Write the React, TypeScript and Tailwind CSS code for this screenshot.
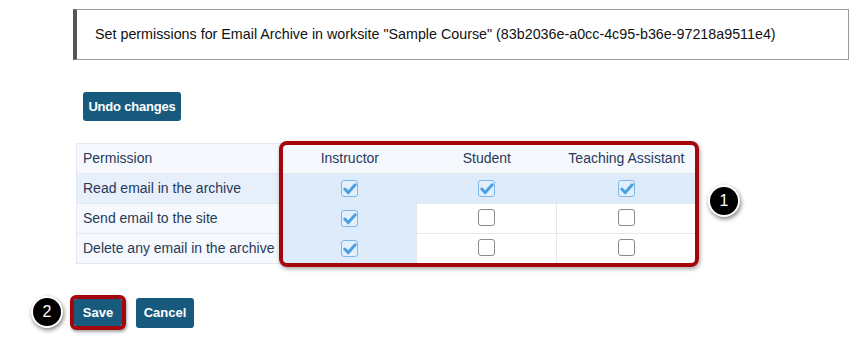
import React from "react";

const rows = [
  { label: "Read email in the archive", values: [true, true, true], highlight: true },
  { label: "Send email to the site", values: [true, false, false], highlight: false },
  { label: "Delete any email in the archive", values: [true, false, false], highlight: false },
];

function Box({ checked }: { checked: boolean }) {
  if (checked) {
    return (
      <span className="inline-flex h-[17px] w-[17px] items-center justify-center rounded-[3px] border border-[#7fb8e8] bg-[#e3f0fc]">
        <svg width="14" height="12" viewBox="0 0 14 12">
          <path d="M1.8 6 L5.3 9.6 L12.2 1.8" fill="none" stroke="#4aa0e4" strokeWidth="3" strokeLinecap="round" strokeLinejoin="round" />
        </svg>
      </span>
    );
  }
  return <span className="inline-block h-[17px] w-[17px] rounded-[3px] border border-[#8a8a8a] bg-white" />;
}

function Callout({ n, className }: { n: string; className: string }) {
  return (
    <div
      className={
        "absolute flex h-[32px] w-[32px] items-center justify-center rounded-full border-2 border-white bg-black text-[16px] text-white shadow-[1px_2px_4px_rgba(0,0,0,0.5)] " +
        className
      }
    >
      {n}
    </div>
  );
}

export default function App() {
  return (
    <div className="relative h-[339px] w-[856px] overflow-hidden bg-white font-['Liberation_Sans',Arial,sans-serif]">
      {/* title box */}
      <div className="ml-[73px] mr-[7px] mt-[9px] flex h-[51px] items-center border border-l-4 border-[#9a9a9a] border-l-[#555] pl-[18px] text-[14.3px] text-[#111]">
        Set permissions for Email Archive in worksite "Sample Course" (83b2036e-a0cc-4c95-b36e-97218a9511e4)
      </div>

      <button className="ml-[83px] mt-[32px] h-[29px] w-[98px] rounded-[3px] bg-[#185a7e] text-[13px] font-bold tracking-[-0.2px] text-white">
        Undo changes
      </button>

      {/* permissions table */}
      <div className="relative ml-[76px] mt-[22px] w-[621px]">
        <table className="w-full border-collapse text-[14px] text-[#27395a]">
          <thead>
            <tr className="h-[30px] bg-[#f5f9fd]">
              <th className="w-[206px] border border-[#e4e9ef] pl-[6px] text-left font-normal">Permission</th>
              <th className="w-[135px] border-y border-[#e4e9ef] text-center font-normal">Instructor</th>
              <th className="w-[140px] border-y border-[#e4e9ef] text-center font-normal">Student</th>
              <th className="w-[140px] border-y border-r border-[#e4e9ef] text-center font-normal">Teaching Assistant</th>
            </tr>
          </thead>
          <tbody>
            {rows.map((r) => (
              <tr key={r.label} className="h-[30px]">
                <td className={"border border-[#e4e9ef] pl-[6px] " + (r.highlight ? "bg-[#e6effa]" : "bg-[#f5f9fd]")}>{r.label}</td>
                {r.values.map((v, i) => (
                  <td
                    key={i}
                    className={
                      "border border-[#e4e9ef] pt-[3px] text-center " +
                      (r.highlight || i === 0 ? "bg-[#deebfa]" : "bg-white")
                    }
                  >
                    <Box checked={v} />
                  </td>
                ))}
              </tr>
            ))}
          </tbody>
        </table>
        <div className="pointer-events-none absolute left-[203px] top-[-2px] h-[126px] w-[420px] rounded-[8px] border-[4px] border-[#a4060c] shadow-[1px_2px_4px_rgba(0,0,0,0.35)]" />
        <Callout n="1" className="left-[632px] top-[42px]" />
      </div>

      {/* save / cancel */}
      <div className="relative mt-[31px] flex items-center pl-[70px]">
        <div className="rounded-[6px] border-[4px] border-[#a4060c] shadow-[1px_2px_3px_rgba(0,0,0,0.35)]">
          <button className="h-[27px] w-[48px] rounded-[2px] bg-[#185a7e] text-[13px] font-bold text-white">Save</button>
        </div>
        <button className="ml-[10px] h-[30px] w-[58px] rounded-[3px] bg-[#185a7e] text-[13px] font-bold text-white">Cancel</button>
        <Callout n="2" className="left-[31px] top-[1px]" />
      </div>
    </div>
  );
}
